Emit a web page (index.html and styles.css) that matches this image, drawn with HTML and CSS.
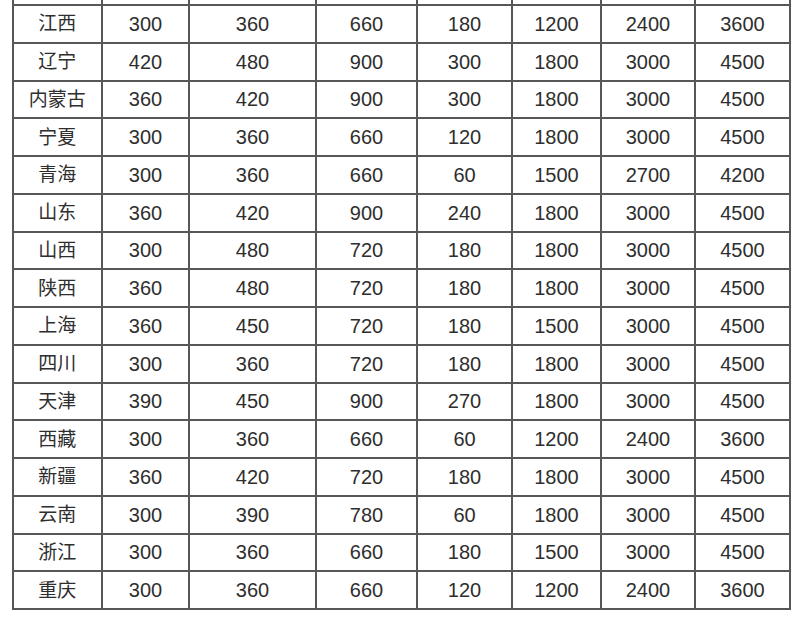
FILE: index.html
```html
<!DOCTYPE html>
<html lang="zh-CN">
<head>
<meta charset="utf-8">
<title>各省费用表</title>
<link rel="stylesheet" href="styles.css">
</head>
<body>
<div class="page">
<table class="fees">
<colgroup>
<col class="c1"><col class="c2"><col class="c3"><col class="c4"><col class="c5"><col class="c6"><col class="c7"><col class="c8">
</colgroup>
<tbody>
<tr class="cut"><td></td><td></td><td></td><td></td><td></td><td></td><td></td><td></td></tr>
<tr><th>江西</th><td>300</td><td>360</td><td>660</td><td>180</td><td>1200</td><td>2400</td><td>3600</td></tr>
<tr><th>辽宁</th><td>420</td><td>480</td><td>900</td><td>300</td><td>1800</td><td>3000</td><td>4500</td></tr>
<tr><th>内蒙古</th><td>360</td><td>420</td><td>900</td><td>300</td><td>1800</td><td>3000</td><td>4500</td></tr>
<tr><th>宁夏</th><td>300</td><td>360</td><td>660</td><td>120</td><td>1800</td><td>3000</td><td>4500</td></tr>
<tr><th>青海</th><td>300</td><td>360</td><td>660</td><td>60</td><td>1500</td><td>2700</td><td>4200</td></tr>
<tr><th>山东</th><td>360</td><td>420</td><td>900</td><td>240</td><td>1800</td><td>3000</td><td>4500</td></tr>
<tr><th>山西</th><td>300</td><td>480</td><td>720</td><td>180</td><td>1800</td><td>3000</td><td>4500</td></tr>
<tr><th>陕西</th><td>360</td><td>480</td><td>720</td><td>180</td><td>1800</td><td>3000</td><td>4500</td></tr>
<tr><th>上海</th><td>360</td><td>450</td><td>720</td><td>180</td><td>1500</td><td>3000</td><td>4500</td></tr>
<tr><th>四川</th><td>300</td><td>360</td><td>720</td><td>180</td><td>1800</td><td>3000</td><td>4500</td></tr>
<tr><th>天津</th><td>390</td><td>450</td><td>900</td><td>270</td><td>1800</td><td>3000</td><td>4500</td></tr>
<tr><th>西藏</th><td>300</td><td>360</td><td>660</td><td>60</td><td>1200</td><td>2400</td><td>3600</td></tr>
<tr><th>新疆</th><td>360</td><td>420</td><td>720</td><td>180</td><td>1800</td><td>3000</td><td>4500</td></tr>
<tr><th>云南</th><td>300</td><td>390</td><td>780</td><td>60</td><td>1800</td><td>3000</td><td>4500</td></tr>
<tr><th>浙江</th><td>300</td><td>360</td><td>660</td><td>180</td><td>1500</td><td>3000</td><td>4500</td></tr>
<tr><th>重庆</th><td>300</td><td>360</td><td>660</td><td>120</td><td>1200</td><td>2400</td><td>3600</td></tr>
</tbody>
</table>
</div>
</body>
</html>
```
FILE: styles.css
```css
html, body {
  margin: 0;
  padding: 0;
  background: #ffffff;
}

.page {
  padding-left: 11.5px;
}

.fees {
  border-collapse: collapse;
  table-layout: fixed;
  width: 779.5px;
  font-family: "Liberation Sans", "Noto Sans CJK SC", sans-serif;
  font-size: 20px;
  color: #2e2e2e;
}

.c1 { width: 89.5px; }
.c2 { width: 87px; }
.c3 { width: 127px; }
.c4 { width: 101px; }
.c5 { width: 95px; }
.c6 { width: 89px; }
.c7 { width: 94px; }
.c8 { width: 95px; }

.fees td,
.fees th {
  border: 2px solid #575757;
  padding: 0;
  height: 35.75px;
  text-align: center;
  vertical-align: middle;
  line-height: 1;
}

.fees th {
  font-weight: normal;
  font-size: 19px;
}

.fees tr.cut td {
  border-top: 0;
  height: 4px;
}
```
